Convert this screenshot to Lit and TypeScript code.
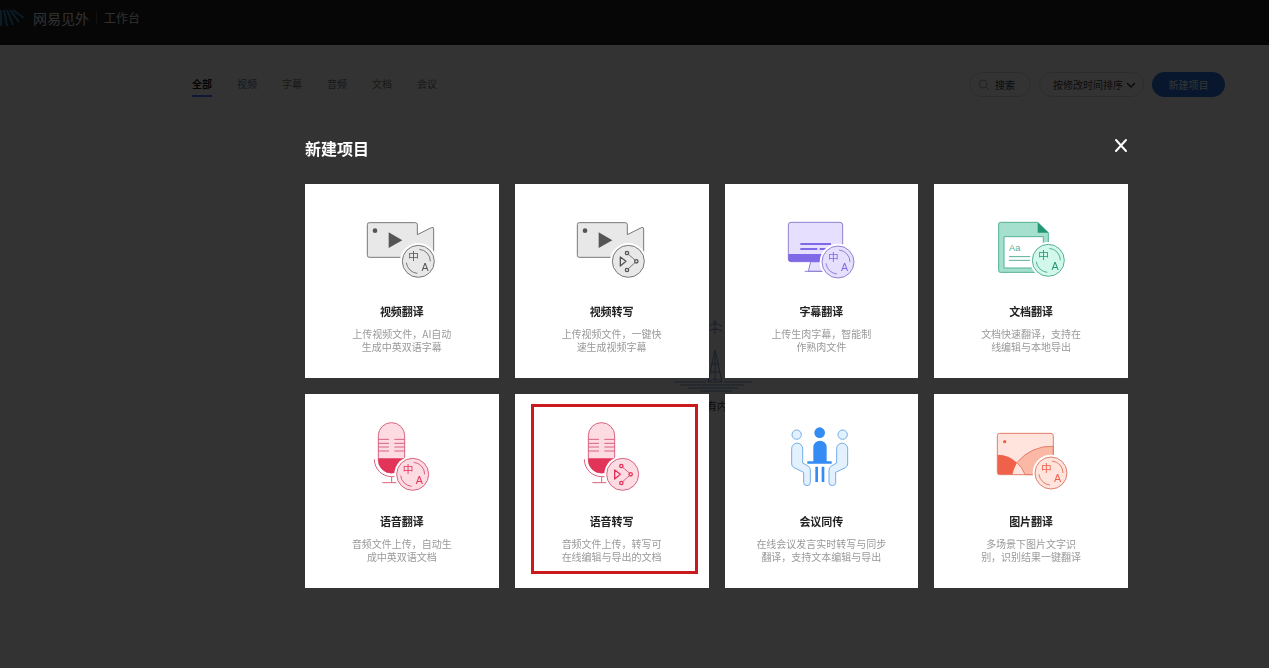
import { LitElement, html, svg, css, nothing } from "lit";
import { customElement, property, state } from "lit/decorators.js";

type Badge = "translate" | "transcribe";

interface Project {
  icon: string;
  badge?: Badge;
  title: string;
  lines: string[];
  marked?: boolean;
}

const PROJECTS: Project[] = [
  { icon: "video", badge: "translate", title: "视频翻译", lines: ["上传视频文件，AI自动", "生成中英双语字幕"] },
  { icon: "video", badge: "transcribe", title: "视频转写", lines: ["上传视频文件，一键快", "速生成视频字幕"] },
  { icon: "subtitle", badge: "translate", title: "字幕翻译", lines: ["上传生肉字幕，智能制", "作熟肉文件"] },
  { icon: "document", badge: "translate", title: "文档翻译", lines: ["文档快速翻译，支持在", "线编辑与本地导出"] },
  { icon: "voice", badge: "translate", title: "语音翻译", lines: ["音频文件上传，自动生", "成中英双语文档"] },
  { icon: "voice", badge: "transcribe", title: "语音转写", lines: ["音频文件上传，转写可", "在线编辑与导出的文档"], marked: true },
  { icon: "meeting", title: "会议同传", lines: ["在线会议发言实时转写与同步", "翻译，支持文本编辑与导出"] },
  { icon: "image", badge: "translate", title: "图片翻译", lines: ["多场景下图片文字识", "别，识别结果一键翻译"] },
];

const person = svg`
  <circle cx="233" cy="134" r="14" />
  <path d="M218 176a16.500 16.500 0 0 1 33 0V219l16 9q7 4 7 12V277a10 10 0 0 1-20 0V247l-29-14q-7-4-7-11z" />`;

/* Every drawing uses three units per pixel. */
const DRAWINGS: Record<string, unknown> = {
  video: svg`
    <path class="line soft" d="M208 128H346q6 0 6 6V164L394 143q7-3 7 4V232H208q-6 0-6-6V134q0-6 6-6z" />
    <circle class="solid" cx="225" cy="152" r="7" />
    <path class="solid" d="M266 157L307 181L266 204z" />`,
  subtitle: svg`
    <path class="line soft" d="M275 245L268 274H318L312 245z" />
    <path class="line" d="M257 274H325" />
    <rect class="line soft" x="208" y="127" width="163" height="118" rx="8" />
    <path class="solid" d="M208 222H371V237q0 8-8 8H216q-8 0-8-8z" />
    <path class="thick" d="M244 192H336M244 207H295M302 207H322" />`,
  document: svg`
    <path class="line mid" d="M214 127H326L358 158V277H214q-5 0-5-5V132q0-5 5-5z" />
    <path class="solid" d="M326 127L358 158H326z" />
    <rect class="line paper" x="225" y="170" width="118" height="94" />
    <text class="letter" x="240" y="212">Aa</text>
    <path class="line" d="M240 230H305M240 241H305" />`,
  voice: svg`
    <rect class="line soft" x="235" y="98" width="79" height="151" rx="39" />
    <path class="solid" d="M235 205H314V210a39.500 39.500 0 0 1-79 0z" />
    <path class="line" d="M235 148H267M235 160H267M235 171H267M235 183H267M283 148H314M283 160H314M283 171H314M283 183H314" />
    <path class="line" d="M223 208A52 52 0 0 0 275 260H290M275 260V278M247 278H290" />`,
  meeting: svg`
    <g class="line soft">${person}</g>
    <g class="line soft" transform="translate(604 0) scale(-1 1)">${person}</g>
    <circle class="solid" cx="302" cy="128" r="16" />
    <path class="solid" d="M283 214V172a19.500 19.500 0 0 1 40 0V214H338V221H265V214zM289 230H297V276H289zM308 230H316V276H308z" />`,
  image: svg`
    <rect class="soft" x="205" y="130" width="168" height="124" rx="7" />
    <path class="line mid" d="M264 218A129 129 0 0 1 373 169V254H288A83 83 0 0 0 264 218z" />
    <path class="solid" d="M205 194A83 83 0 0 1 264 218A129 129 0 0 0 250 254H211q-6 0-6-6z" />
    <rect class="line hollow" x="205" y="130" width="168" height="124" rx="7" />
    <circle class="solid" cx="227" cy="155" r="5" />`,
};

const BADGE_CENTRES: Record<string, string> = {
  video: "355 244",
  subtitle: "357 246",
  document: "358 241",
  voice: "338 253",
  image: "366 249",
};

@customElement("project-icon")
class ProjectIcon extends LitElement {
  @property() name = "video";
  @property() badge?: Badge;

  static styles = css`
    :host { display: block; }
    .art { display: block; width: 98px; height: 80px; }
    .video { --ink: #777; --soft: #e8e8e8; --solid: #555; }
    .subtitle { --ink: #9181d2; --soft: #e6dffd; --solid: #8069e6; }
    .document { --ink: #55b096; --soft: #d2f8ec; --mid: #a5dfcd; --solid: #239673; }
    .voice { --ink: #d9627f; --soft: #fddbe3; --solid: #e23459; }
    .meeting { --ink: #72aee6; --soft: #e3f1ff; --solid: #348bf3; }
    .image { --ink: #e37e6c; --soft: #fee4dd; --mid: #fab8a5; --solid: #f0614b; }
    .line { fill: none; stroke: var(--ink); stroke-width: 3; stroke-linejoin: round; }
    .soft { fill: var(--soft); }
    .mid { fill: var(--mid); }
    .paper { fill: #fff; }
    .hollow { fill: none; }
    .solid { fill: var(--solid); }
    .thick { stroke: var(--solid); stroke-width: 6; }
    .halo { fill: #fff; }
    .node { fill: none; stroke: var(--solid); stroke-width: 4; stroke-linejoin: round; }
    .letter {
      fill: var(--ink);
      font: 28px "Liberation Sans", sans-serif;
    }
    .glyph {
      fill: var(--solid);
      font: 400 32px "Liberation Sans", "Noto Sans CJK SC", sans-serif;
      text-anchor: middle;
    }
  `;

  private drawBadge() {
    if (!this.badge) return nothing;
    const inner =
      this.badge === "translate"
        ? svg`
          <path class="line" d="M3-36A36 36 0 0 1 36 0M-36 4A36 36 0 0 0 -3 36" />
          <text class="glyph" x="-14" y="-3">中</text>
          <text class="glyph" x="20" y="28">A</text>`
        : svg`
          <path class="line" d="M0-21L20-4M20 4L0 22" />
          <path class="node" d="M-24-13L-7 0L-24 14z" />
          <circle class="node" cx="-4" cy="-25" r="5" />
          <circle class="node" cx="24" cy="0" r="5" />
          <circle class="node" cx="-4" cy="26" r="5" />`;
    return svg`
      <g transform="translate(${BADGE_CENTRES[this.name]})">
        <circle class="halo" r="55" />
        <circle class="line soft" r="48" />
        ${inner}
      </g>`;
  }

  render() {
    return html`
      <svg class="art ${this.name}" viewBox="159 72 294 240" aria-hidden="true">
        ${DRAWINGS[this.name]} ${this.drawBadge()}
      </svg>
    `;
  }
}

@customElement("new-project-dialog")
class NewProjectDialog extends LitElement {
  static styles = css`
    :host {
      position: fixed;
      inset: 0;
      overflow: auto;
      display: flex;
      justify-content: center;
      align-items: flex-start;
      box-sizing: border-box;
      padding: 137px 0 24px 164px;
      background: rgba(0, 0, 0, 0.8);
    }
    .dialog { width: 100%; max-width: 823px; }
    .head {
      display: flex;
      justify-content: space-between;
      align-items: flex-start;
      margin-bottom: 25px;
    }
    .title { margin: 0; font-size: 16px; line-height: 22px; font-weight: 700; color: #fff; }
    .close { display: block; padding: 0; border: 0; background: none; cursor: pointer; }
    .cross { display: block; width: 14px; height: 16px; fill: none; stroke: #fff; stroke-width: 2; stroke-linecap: round; }
    .grid { display: grid; grid-template-columns: repeat(4, 1fr); gap: 16px; }
    .card {
      position: relative;
      display: flex;
      flex-direction: column;
      align-items: center;
      aspect-ratio: 1;
      padding: 20px 0 0;
      border: 0;
      background: #fff;
      font-family: inherit;
      text-align: center;
      cursor: pointer;
    }
    .name { margin-top: 19px; font-size: 11px; line-height: 16px; font-weight: 700; color: #222; }
    .text { margin-top: 8px; font-size: 10px; line-height: 13px; color: #999; white-space: nowrap; }
    .row { display: block; }
    .mark { position: absolute; inset: 10px 11px 14px 16px; border: 3px solid #cb1a1e; }
  `;

  private close() {
    this.dispatchEvent(new CustomEvent("dismiss"));
  }

  render() {
    return html`
      <section class="dialog" role="dialog" aria-labelledby="title">
        <header class="head">
          <h2 class="title" id="title">新建项目</h2>
          <button class="close" aria-label="关闭" @click=${this.close}>
            <svg class="cross" viewBox="0 0 14 16" aria-hidden="true"><path d="M2 3L12 14M12 3L2 14" /></svg>
          </button>
        </header>
        <div class="grid">
          ${PROJECTS.map(
            (p) => html`
              <button class="card">
                <project-icon .name=${p.icon} .badge=${p.badge}></project-icon>
                <span class="name">${p.title}</span>
                <span class="text">${p.lines.map((l) => html`<span class="row">${l}</span>`)}</span>
                ${p.marked ? html`<span class="mark"></span>` : nothing}
              </button>
            `
          )}
        </div>
      </section>
    `;
  }
}

@customElement("app-root")
class AppRoot extends LitElement {
  @state() private open = true;
  @state() private tab = "全部";

  static styles = css`
    :host {
      display: block;
      min-height: 100vh;
      background: #fff;
      color: #333;
      font-family: "Noto Sans CJK SC", sans-serif;
    }
    .top {
      display: flex;
      align-items: center;
      height: 45px;
      box-sizing: border-box;
      padding-bottom: 10px;
      background: #1e1e1e;
      color: #eee;
    }
    .logo { width: 26px; height: 18px; margin-right: 7px; fill: none; stroke: #2f8fc8; stroke-width: 2; }
    .brand { font-size: 14px; line-height: 20px; }
    .place { margin-left: 7px; padding-left: 7px; border-left: 1px solid #555; font-size: 12px; line-height: 12px; }
    .bar {
      display: flex;
      justify-content: space-between;
      align-items: center;
      padding: 27px 44px 0 192px;
    }
    .tabs { display: flex; gap: 25px; }
    .tab {
      padding: 3px 0 2px;
      border: 0;
      border-bottom: 2px solid transparent;
      background: none;
      font: 10px/18px "Noto Sans CJK SC", sans-serif;
      color: #777;
    }
    .current { border-color: #4a7dff; font-weight: 700; color: #111; }
    .tools { display: flex; gap: 8px; }
    .pill {
      display: flex;
      align-items: center;
      height: 25px;
      box-sizing: border-box;
      border: 1px solid #ddd;
      border-radius: 13px;
      color: #444;
    }
    .search { width: 62px; padding: 0 8px; gap: 6px; }
    .sort { width: 105px; padding: 0 7px 0 13px; }
    .glass { flex: none; width: 11px; height: 11px; fill: none; stroke: #aaa; }
    .arrow { flex: none; width: 10px; height: 8px; fill: none; stroke: #333; stroke-width: 1.500; }
    .field {
      flex: 1;
      min-width: 0;
      width: 100%;
      padding: 0;
      border: 0;
      outline: 0;
      appearance: none;
      background: none;
      font: 10px/16px "Noto Sans CJK SC", sans-serif;
      color: inherit;
    }
    .field::placeholder { color: #333; opacity: 1; }
    .create {
      width: 73px;
      height: 25px;
      padding: 0;
      border: 0;
      border-radius: 13px;
      background: #2b72e0;
      color: #fff;
      font: 10px/16px "Noto Sans CJK SC", sans-serif;
    }
    .empty {
      display: flex;
      flex-direction: column;
      align-items: center;
      padding: 221px 0 0 165px;
    }
    .tower { width: 90px; height: 76px; fill: none; stroke: #7f9bc8; }
    .note { margin: 5px 0 0; font-size: 10px; line-height: 14px; }
  `;

  render() {
    return html`
      <header class="top">
        <svg class="logo" viewBox="0 0 26 18" aria-hidden="true">
          <path d="M1 1V17M4 1L7 17M7 1L13 16M10 1L19 13M13 1L24 9" />
        </svg>
        <span class="brand">网易见外</span>
        <span class="place">工作台</span>
      </header>
      <main>
        <div class="bar">
          <nav class="tabs">
            ${["全部", "视频", "字幕", "音频", "文档", "会议"].map(
              (t) => html`<button class="tab ${t === this.tab ? "current" : ""}" @click=${() => (this.tab = t)}>${t}</button>`
            )}
          </nav>
          <div class="tools">
            <label class="pill search">
              <svg class="glass" viewBox="0 0 11 11" aria-hidden="true"><circle cx="5" cy="5" r="4" /><path d="M8 8L11 11" /></svg>
              <input class="field" type="text" placeholder="搜索" aria-label="搜索" />
            </label>
            <label class="pill sort">
              <select class="field" aria-label="排序"><option>按修改时间排序</option></select>
              <svg class="arrow" viewBox="0 0 10 8" aria-hidden="true"><path d="M1 2L5 6L9 2" /></svg>
            </label>
            <button class="create" @click=${() => (this.open = true)}>新建项目</button>
          </div>
        </div>
        <div class="empty">
          <svg class="tower" viewBox="0 0 90 76" aria-hidden="true">
            <path d="M41 4H45M36 8Q43 4 50 8M36 13Q43 9 50 13M43 2V16M43 32L36 64H50L43 32V64M39 46H47M38 54H48M36 64Q43 58 50 64" />
            <path d="M2 64H34M52 64H80M8 67H72M16 70H66M28 73H60" />
          </svg>
          <p class="note">没有内容</p>
        </div>
      </main>
      ${this.open ? html`<new-project-dialog @dismiss=${() => (this.open = false)}></new-project-dialog>` : nothing}
    `;
  }
}
